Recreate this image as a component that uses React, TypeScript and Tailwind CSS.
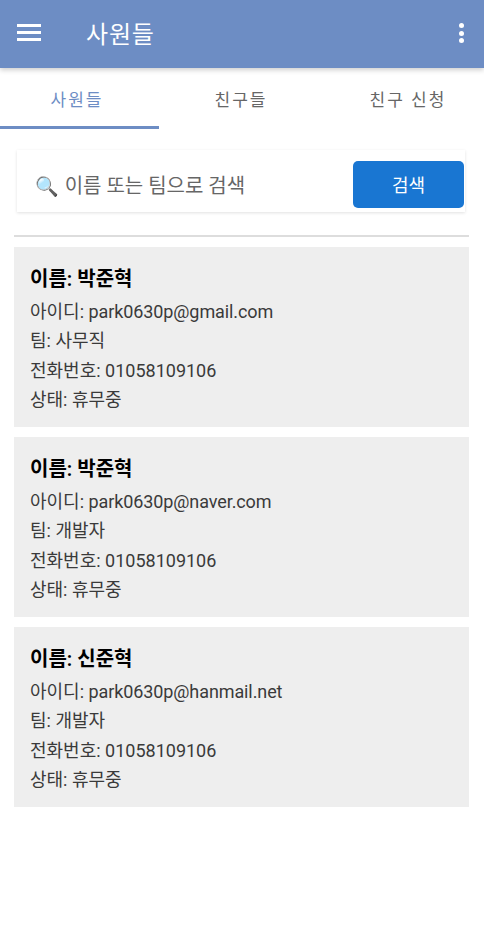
import React from 'react';

const employees = [
    { name: '박준혁', id: 'park0630p@gmail.com', team: '사무직' },
    { name: '박준혁', id: 'park0630p@naver.com', team: '개발자' },
    { name: '신준혁', id: 'park0630p@hanmail.net', team: '개발자' },
];

const fontFamily = "font-['Roboto','Noto_Sans_CJK_KR',sans-serif]";

const App: React.FC = () => {
    return (
        <div className={`min-h-[952px] bg-white ${fontFamily}`}>
            <header className="h-[68px] bg-[#6d8dc4] flex items-center justify-between pl-[17px] pr-[20px] shadow-[0_2px_5px_rgba(0,0,0,0.2)] relative">
                <div className="flex items-center">
                    <div className="w-6 flex flex-col gap-[4.5px] -mt-[3px]">
                        <span className="h-[2.5px] bg-white"></span>
                        <span className="h-[2.5px] bg-white"></span>
                        <span className="h-[2.5px] bg-white"></span>
                    </div>
                    <h1 className="ml-[45px] pt-[1px] text-[24px] tracking-[0.8px] leading-8 text-white">사원들</h1>
                </div>
                <div className="flex flex-col gap-[2.5px] -mt-[2px]">
                    <span className="w-[5px] h-[5px] rounded-full bg-white"></span>
                    <span className="w-[5px] h-[5px] rounded-full bg-white"></span>
                    <span className="w-[5px] h-[5px] rounded-full bg-white"></span>
                </div>
            </header>

            <nav className="flex h-[61px] text-[17px] tracking-[2px] text-[#666]">
                <div className="w-[159px] pt-[8px] pr-[5px] flex items-center justify-center border-b-[3px] border-[#6d8dc4] text-[#6d8dc4]">사원들</div>
                <div className="w-[165px] pt-[5px] pr-[1px] flex items-center justify-center">친구들</div>
                <div className="w-[160px] pt-[5px] pl-[8px] flex items-center justify-center">친구 신청</div>
            </nav>

            <div className="mt-[21px] ml-[17px] mr-[19px] h-[62px] bg-white shadow-[0_1px_3px_rgba(0,0,0,0.12)] flex items-start justify-between pl-[18px] pr-[1px]">
                <div className="flex items-center gap-[6px] text-[20px] text-[#666] mt-[21px]">
                    <span className="text-[19px] leading-none font-['Noto_Color_Emoji',sans-serif]">🔍</span>
                    <span>이름 또는 팀으로 검색</span>
                </div>
                <button className="w-[111px] h-[47px] mt-[11px] pt-[1px] rounded-[5px] bg-[#1976d2] text-white text-[18px]">검색</button>
            </div>

            <div className="mt-[23px] ml-[14px] mr-[15px] h-[2px] bg-[#ddd]"></div>

            <div className="mt-[10px] ml-[14px] mr-[15px] flex flex-col gap-[10px]">
                {employees.map((emp) => (
                    <div key={emp.id} className="h-[180px] bg-[#eeeeee] pl-[16px] pt-[17px]">
                        <div className="text-[20px] leading-[30px] font-semibold text-black">이름: {emp.name}</div>
                        <div className="mt-[3px] flex flex-col text-[18px] leading-[29.4px] text-[#3a3a3a]">
                            <div>아이디: <span className="tracking-[-0.1px]">{emp.id}</span></div>
                            <div>팀: {emp.team}</div>
                            <div>전화번호: 01058109106</div>
                            <div>상태: 휴무중</div>
                        </div>
                    </div>
                ))}
            </div>
        </div>
    );
};

export default App;
